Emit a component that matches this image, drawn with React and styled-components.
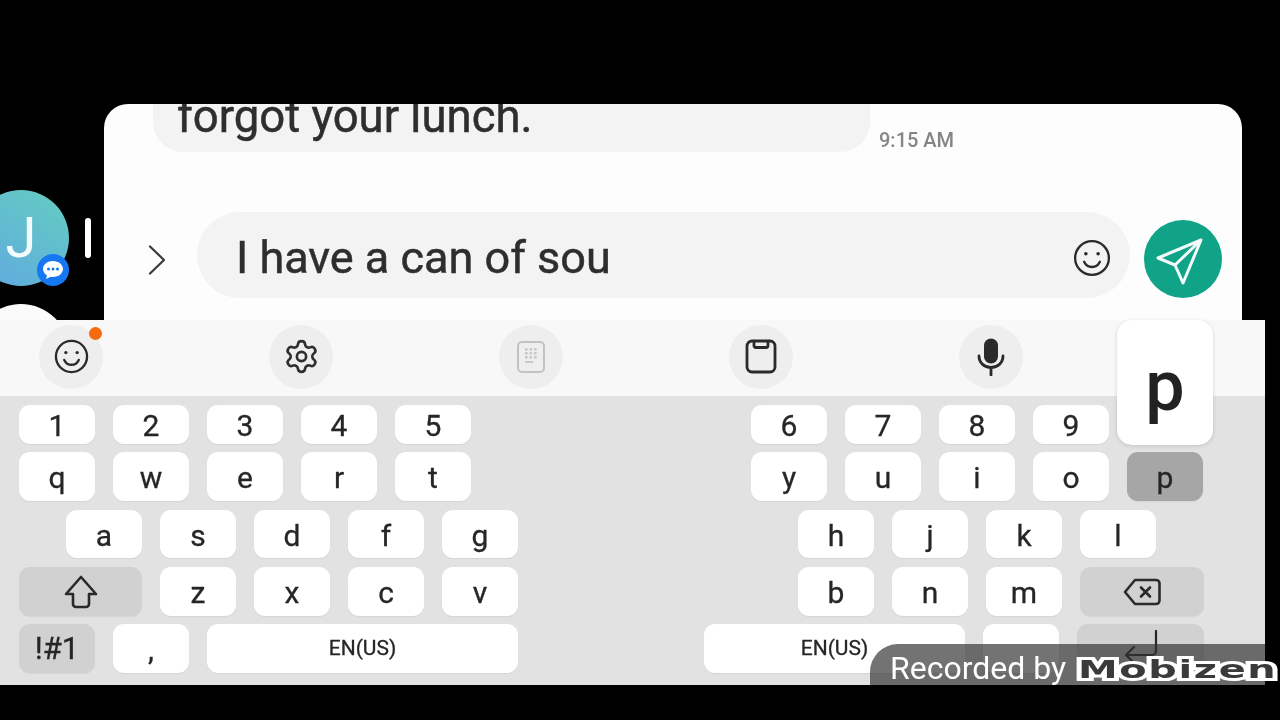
import React from "react";
import styled, { createGlobalStyle } from "styled-components";
import { Settings } from "lucide-react";

const Global = createGlobalStyle`
  html, body { margin: 0; background: #000; }
  body { font-family: Roboto, "Liberation Sans", sans-serif; }
`;

const Page = styled.div`
  width: 1280px;
  height: 720px;
  padding-top: 104px;
  box-sizing: border-box;
  background: #000;
  overflow: hidden;
  filter: blur(0.45px);
`;

const Upper = styled.div`
  display: flex;
  height: 216px;
`;

const Rail = styled.div`
  display: flex;
  width: 104px;
  height: 216px;
  flex: none;
  overflow: hidden;
`;

const BubbleStack = styled.div`
  display: flex;
  flex-direction: column;
  gap: 18px;
  flex: none;
  width: 96px;
  margin: 86px 0 0 -27px;
`;

const Avatar = styled.div`
  position: relative;
  display: flex;
  align-items: center;
  justify-content: center;
  flex: none;
  width: 96px;
  height: 96px;
  border-radius: 50%;
  color: #f4fbfc;
  font-size: 56px;
  font-weight: 400;
  background: linear-gradient(215deg, #64cdc0 0%, #5fa8e2 100%);
`;

const Ghost = styled.div`
  flex: none;
  width: 96px;
  height: 96px;
  border-radius: 50%;
  background: #fbfbfb;
`;

const Badge = styled.div`
  position: absolute;
  right: 0;
  bottom: 0;
  display: flex;
  align-items: center;
  justify-content: center;
  width: 32px;
  height: 32px;
  border-radius: 50%;
  background: #1677f2;
`;

const Handle = styled.div`
  flex: none;
  width: 6px;
  height: 40px;
  margin: 114px 0 0 16px;
  border-radius: 3px;
  background: #fff;
`;

const Card = styled.div`
  width: 1138px;
  height: 216px;
  flex: none;
  border-radius: 24px 24px 0 0;
  background: #fdfdfd;
  overflow: hidden;
`;

const MessageRow = styled.div`
  display: flex;
  align-items: flex-end;
  height: 48px;
`;

const MessageBubble = styled.div`
  display: flex;
  align-items: flex-end;
  box-sizing: border-box;
  width: 717px;
  height: 48px;
  margin-left: 49px;
  padding: 0 0 11px 24px;
  border-radius: 0 0 30px 30px;
  background: #f3f3f3;
  color: #2e2e2e;
  font-size: 45.5px;
  line-height: 48px;
  -webkit-text-stroke: 0.5px #2e2e2e;
  overflow: hidden;
  white-space: nowrap;
`;

const Time = styled.div`
  margin: 0 0 1px 9px;
  color: #858585;
  font-size: 20px;
  font-weight: 500;
  line-height: 21px;
`;

const ComposeRow = styled.div`
  display: flex;
  align-items: flex-start;
  height: 86px;
  margin-top: 60px;
  padding-left: 44px;
`;

const Chevron = styled.svg`
  flex: none;
  width: 18px;
  height: 30px;
  margin-top: 33px;
`;

const InputPill = styled.div`
  display: flex;
  align-items: center;
  justify-content: space-between;
  box-sizing: border-box;
  flex: none;
  width: 933px;
  height: 86px;
  margin-left: 31px;
  padding: 5px 19px 0 39px;
  border-radius: 43px;
  background: #f3f3f3;
  color: #2e2e2e;
  font-size: 45px;
  -webkit-text-stroke: 0.5px #2e2e2e;
`;

const SendButton = styled.div`
  flex: none;
  width: 78px;
  height: 78px;
  margin: 8px 0 0 14px;
  border-radius: 50%;
  background: #10a387;
`;

const Keyboard = styled.div`
  position: relative;
  width: 1265px;
  height: 365px;
  background: #e2e2e2;
`;

const Toolbar = styled.div`
  display: flex;
  align-items: center;
  gap: 166px;
  box-sizing: border-box;
  height: 76px;
  padding: 0 0 3px 39px;
  background: #f8f8f8;
`;

const ToolCircle = styled.div`
  position: relative;
  display: flex;
  align-items: center;
  justify-content: center;
  flex: none;
  width: 64px;
  height: 64px;
  border-radius: 50%;
  background: #eeeeee;
  color: #2f2f2f;
`;

const Dot = styled.span`
  position: absolute;
  top: 2px;
  right: 1px;
  width: 13px;
  height: 13px;
  border-radius: 50%;
  background: #f56b10;
`;

const Keys = styled.div`
  display: flex;
  padding-top: 9px;
`;

const Half = styled.div`
  display: flex;
  flex-direction: column;
  flex: none;
  width: ${(p) => p.$width}px;
  margin-left: ${(p) => p.$offset}px;
`;

const KeyRow = styled.div`
  display: flex;
  gap: 18px;
  height: ${(p) => p.$h}px;
  margin-bottom: ${(p) => p.$after}px;
  padding-left: ${(p) => p.$indent || 0}px;
`;

const toneColor = { plain: "#ffffff", fn: "#d1d1d1", pressed: "#a6a6a6" };

const Key = styled.div`
  display: flex;
  align-items: center;
  justify-content: center;
  box-sizing: border-box;
  flex: none;
  width: ${(p) => p.$w || 76}px;
  padding-top: ${(p) => (p.$flat ? 0 : 3)}px;
  border-radius: 11px;
  background: ${(p) => toneColor[p.$tone || "plain"]};
  box-shadow: 0 1px 1px rgba(0, 0, 0, 0.06);
  color: #262626;
  font-size: ${(p) => p.$size || 30}px;
  line-height: 1;
  -webkit-text-stroke: 0.3px #262626;
`;

const Popup = styled.div`
  position: absolute;
  top: 0;
  left: 1117px;
  display: flex;
  align-items: center;
  justify-content: center;
  box-sizing: border-box;
  width: 96px;
  height: 125px;
  padding-top: 6px;
  border-radius: 15px;
  background: #fff;
  box-shadow: 0 1px 4px rgba(0, 0, 0, 0.14);
  color: #222;
  font-size: 70px;
  font-weight: 500;
`;

const Recorder = styled.div`
  position: absolute;
  left: 870px;
  right: 0;
  bottom: 0;
  display: flex;
  align-items: center;
  box-sizing: border-box;
  height: 41px;
  padding: 7px 0 0 20px;
  border-radius: 28px 0 0 0;
  background: rgba(48, 48, 48, 0.68);
  color: #fff;
  font-size: 32px;
  white-space: nowrap;
`;

const Logo = styled.span`
  position: absolute;
  left: 208px;
  top: 9px;
  color: #3a3a3a;
  font-family: "DejaVu Sans", sans-serif;
  font-size: 24px;
  font-weight: 700;
  line-height: 34px;
  letter-spacing: 1px;
  -webkit-text-stroke: 6px #fff;
  paint-order: stroke fill;
  transform: scaleX(1.66);
  transform-origin: left center;
`;

const Smile = ({ size, width = 2.4 }) => (
  <svg width={size} height={size} viewBox="0 0 36 36" fill="none" stroke="#2a2a2a" strokeWidth={width} strokeLinecap="round">
    <circle cx="18" cy="18" r="16" />
    <circle cx="12.200" cy="14" r="1.700" fill="#2a2a2a" stroke="none" />
    <circle cx="23.800" cy="14" r="1.700" fill="#2a2a2a" stroke="none" />
    <path d="M10.500 21.500c1.600 3.400 4.200 5 7.500 5s5.900-1.600 7.500-5" />
  </svg>
);

const KeypadIcon = () => (
  <svg width="30" height="34" viewBox="0 0 30 34" fill="none">
    <rect x="2" y="2" width="26" height="30" rx="4" stroke="#c2c2c2" strokeWidth="2" />
    {[9, 13.5, 18].map((x) => [8, 12, 16].map((y) => <rect key={`${x}-${y}`} x={x} y={y} width="2.600" height="2.600" fill="#c8c8c8" />))}
    <rect x="9" y="21" width="8" height="2" fill="#c8c8c8" />
  </svg>
);

const ClipboardIcon = () => (
  <svg width="32" height="35" viewBox="0 0 32 35" fill="none" stroke="#2a2a2a" strokeWidth="2.800" strokeLinejoin="round">
    <rect x="2" y="2" width="28" height="31" rx="5" />
    <path d="M9 2v4.500a2 2 0 0 0 2 2h10a2 2 0 0 0 2-2V2" />
  </svg>
);

const MicIcon = () => (
  <svg width="28" height="38" viewBox="0 0 28 38" fill="none" stroke="#2a2a2a" strokeWidth="2.800" strokeLinecap="round">
    <rect x="7" y="0.500" width="14" height="25" rx="7" fill="#2a2a2a" stroke="none" />
    <path d="M2 18c0 7 5.500 11.500 12 11.500S26 25 26 18M14 29.500V37" />
  </svg>
);

const ShiftIcon = () => (
  <svg width="34" height="34" viewBox="0 0 34 34" fill="none" stroke="#2a2a2a" strokeWidth="2.600" strokeLinejoin="round">
    <path d="M17 2 32 19h-7v10a3 3 0 0 1-3 3h-10a3 3 0 0 1-3-3V19H2z" />
  </svg>
);

const BackspaceIcon = () => (
  <svg width="38" height="28" viewBox="0 0 38 28" fill="none" stroke="#2a2a2a" strokeWidth="2.600" strokeLinejoin="round" strokeLinecap="round">
    <path d="M12 2h21a3.500 3.500 0 0 1 3.500 3.500v17A3.500 3.500 0 0 1 33 26H12L2 14z" />
    <path d="M18 9.500l9 9M27 9.500l-9 9" />
  </svg>
);

const EnterIcon = () => (
  <svg width="36" height="38" viewBox="0 0 36 38" fill="none" stroke="#262626" strokeWidth="2.200" strokeLinecap="round" strokeLinejoin="round">
    <path d="M33 1v20a4 4 0 0 1-4 4H3M11 17l-8 8 8 8" />
  </svg>
);

const leftRows = [
  { h: 39, after: 8, keys: ["1", "2", "3", "4", "5"] },
  { h: 49, after: 9, keys: ["q", "w", "e", "r", "t"] },
  { h: 48, after: 9, indent: 47, keys: ["a", "s", "d", "f", "g"] },
];

const rightRows = [
  { h: 39, after: 8, indent: 47, keys: ["6", "7", "8", "9"] },
  { h: 49, after: 9, indent: 47, keys: ["y", "u", "i", "o"], pressed: "p" },
  { h: 48, after: 9, indent: 94, keys: ["h", "j", "k", "l"] },
];

export default function App() {
  return (
    <>
      <Global />
      <Page>
        <Upper>
          <Rail>
            <BubbleStack>
              <Avatar>
                J
                <Badge>
                  <svg width="22" height="20" viewBox="0 0 22 20">
                    <path d="M11 1C5.500 1 1 4.500 1 9c0 2.600 1.500 4.800 3.800 6.300L4.200 19l4.300-2.300c.8.200 1.600.3 2.500.3 5.500 0 10-3.600 10-8S16.500 1 11 1z" fill="#fff" />
                    <circle cx="6.500" cy="9" r="1.500" fill="#1677f2" />
                    <circle cx="11" cy="9" r="1.500" fill="#1677f2" />
                    <circle cx="15.500" cy="9" r="1.500" fill="#1677f2" />
                  </svg>
                </Badge>
              </Avatar>
              <Ghost />
            </BubbleStack>
            <Handle />
          </Rail>
          <Card>
            <MessageRow>
              <MessageBubble>forgot your lunch.</MessageBubble>
              <Time>9:15 AM</Time>
            </MessageRow>
            <ComposeRow>
              <Chevron viewBox="0 0 18 30" fill="none" stroke="#3a3a3a" strokeWidth="2.200" strokeLinecap="round" strokeLinejoin="round">
                <path d="M2 1.500 16 15 2 28.500" />
              </Chevron>
              <InputPill>
                I have a can of sou
                <Smile size={38} width={2.200} />
              </InputPill>
              <SendButton>
                <svg width="78" height="78" viewBox="0 0 78 78" fill="none" stroke="#f2fbf9" strokeWidth="3" strokeLinejoin="round" strokeLinecap="round">
                  <path d="M57 20 14 38l17 7 8 18zM57 20 31 45" />
                </svg>
              </SendButton>
            </ComposeRow>
          </Card>
        </Upper>
        <Keyboard>
          <Toolbar>
            <ToolCircle>
              <Smile size={35} />
              <Dot />
            </ToolCircle>
            <ToolCircle>
              <Settings size={37} strokeWidth={1.700} />
            </ToolCircle>
            <ToolCircle>
              <KeypadIcon />
            </ToolCircle>
            <ToolCircle>
              <ClipboardIcon />
            </ToolCircle>
            <ToolCircle>
              <MicIcon />
            </ToolCircle>
          </Toolbar>
          <Keys>
            <Half $width={499} $offset={19}>
              {leftRows.map((row) => (
                <KeyRow key={row.keys[0]} $h={row.h} $after={row.after} $indent={row.indent}>
                  {row.keys.map((k) => (
                    <Key key={k}>{k}</Key>
                  ))}
                </KeyRow>
              ))}
              <KeyRow $h={49} $after={8}>
                <Key $w={123} $tone="fn" $flat>
                  <ShiftIcon />
                </Key>
                {["z", "x", "c", "v"].map((k) => (
                  <Key key={k}>{k}</Key>
                ))}
              </KeyRow>
              <KeyRow $h={49} $after={0}>
                <Key $tone="fn" $size={31} $flat>!#1</Key>
                <Key>,</Key>
                <Key $w={311} $size={21} $flat>EN(US)</Key>
              </KeyRow>
            </Half>
            <Half $width={500} $offset={186}>
              {rightRows.map((row) => (
                <KeyRow key={row.keys[0]} $h={row.h} $after={row.after} $indent={row.indent}>
                  {row.keys.map((k) => (
                    <Key key={k}>{k}</Key>
                  ))}
                  {row.pressed && <Key $tone="pressed">{row.pressed}</Key>}
                </KeyRow>
              ))}
              <KeyRow $h={49} $after={8} $indent={94}>
                {["b", "n", "m"].map((k) => (
                  <Key key={k}>{k}</Key>
                ))}
                <Key $w={124} $tone="fn" $flat>
                  <BackspaceIcon />
                </Key>
              </KeyRow>
              <KeyRow $h={49} $after={0}>
                <Key $w={261} $size={21} $flat>EN(US)</Key>
                <Key />
                <Key $w={127} $tone="fn" $flat>
                  <EnterIcon />
                </Key>
              </KeyRow>
            </Half>
          </Keys>
          <Popup>p</Popup>
          <Recorder>
            Recorded by
            <Logo>Mobizen</Logo>
          </Recorder>
        </Keyboard>
      </Page>
    </>
  );
}
